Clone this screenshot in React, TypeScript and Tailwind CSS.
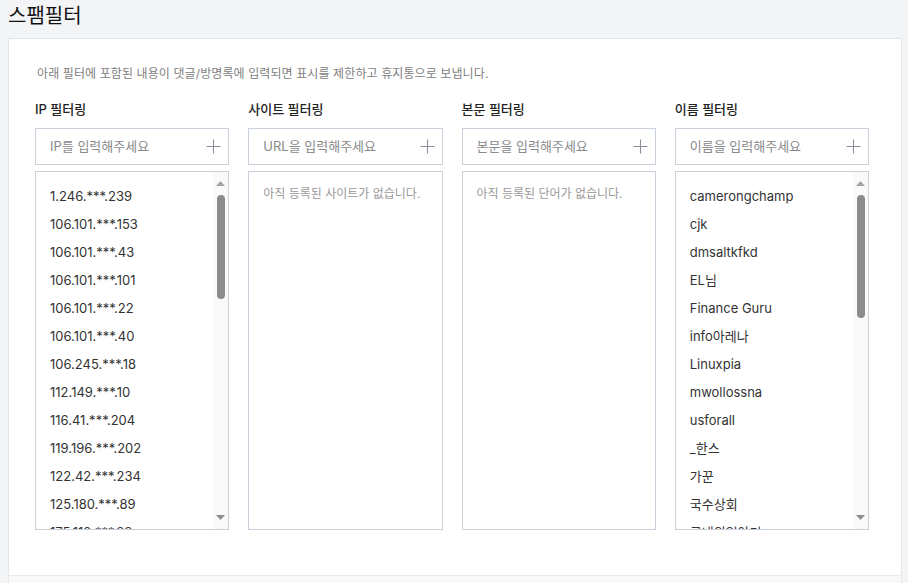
import React from 'react';

const ips = [
  '1.246.***.239', '106.101.***.153', '106.101.***.43', '106.101.***.101', '106.101.***.22',
  '106.101.***.40', '106.245.***.18', '112.149.***.10', '116.41.***.204', '119.196.***.202',
  '122.42.***.234', '125.180.***.89', '175.112.***.88',
];

const names = [
  'camerongchamp', 'cjk', 'dmsaltkfkd', 'EL님', 'Finance Guru', 'info아레나', 'Linuxpia',
  'mwollossna', 'usforall', '_한스', '가꾼', '국수상회', '국내의일야기',
];

const font = "font-['Inter','Noto_Sans_CJK_KR',sans-serif]";

function Plus() {
  return (
    <svg width="15" height="15" viewBox="0 0 15 15" className="shrink-0">
      <path d="M7.5 0.5v14M0.5 7.5h14" stroke="#8a8f98" strokeWidth="1.1" fill="none" />
    </svg>
  );
}

function Scrollbar({ thumb }: { thumb: number }) {
  return (
    <div className="w-[15px] shrink-0 bg-[#f9f9f9] flex flex-col items-center">
      <svg width="9" height="5" viewBox="0 0 9 5" className="mt-[9px]">
        <path d="M0 5L4.5 0L9 5Z" fill="#a3a3a3" />
      </svg>
      <div className="mt-[9px] w-[8px] rounded-full bg-[#8c8c8c]" style={{ height: thumb }} />
      <div className="flex-1" />
      <svg width="9" height="5" viewBox="0 0 9 5" className="mb-[9px]">
        <path d="M0 0L4.5 5L9 0Z" fill="#8c8c8c" />
      </svg>
    </div>
  );
}

function FilterColumn({ label, placeholder, items, empty, thumb }: { label: string; placeholder: string; items: string[]; empty: string; thumb: number }) {
  return (
    <div className="flex flex-col">
      <div className="text-[13px] font-medium text-[#222] h-[20px] leading-[20px]">{label}</div>
      <div className="mt-[9px] h-[37px] border border-[#c9d1dc] bg-white flex items-center justify-between pl-[14px] pr-[7px]">
        <span className="text-[13px] text-[#8a8a8a]">{placeholder}</span>
        <Plus />
      </div>
      <div className="mt-[6px] h-[359px] border border-[#c9d1dc] bg-white flex overflow-hidden">
        {items.length > 0 ? (
          <>
            <ul className="flex-1 pt-[10px] pl-[14px] overflow-hidden">
              {items.map((it, i) => (
                <li key={i} className="h-[28px] leading-[28px] text-[13px] text-[#333] whitespace-nowrap">{it}</li>
              ))}
            </ul>
            <Scrollbar thumb={thumb} />
          </>
        ) : (
          <div className="pt-[13px] pl-[14px] text-[12px] text-[#999]">{empty}</div>
        )}
      </div>
    </div>
  );
}

export default function App() {
  return (
    <div className={`${font} bg-[#f3f4f6] w-[908px] h-[583px] overflow-hidden flex flex-col`}>
      <div className="pl-[8px] pt-[2px] h-[38px] shrink-0 text-[20px] text-[#111] leading-[28px]">스팸필터</div>
      <div className="ml-[8px] w-[894px] border border-[#e2e5ea] border-b-0 bg-white px-[26px] pt-[26px] h-[537px] shrink-0">
        <p className="text-[12px] text-[#808080] pl-[2px] leading-[18px] tracking-[0.1px]">
          아래 필터에 포함된 내용이 댓글/방명록에 입력되면 표시를 제한하고 휴지통으로 보냅니다.
        </p>
        <div className="mt-[16px] grid grid-cols-4 gap-x-[19px] w-[834px]">
          <FilterColumn label="IP 필터링" placeholder="IP를 입력해주세요" items={ips} empty="" thumb={104} />
          <FilterColumn label="사이트 필터링" placeholder="URL을 입력해주세요" items={[]} empty="아직 등록된 사이트가 없습니다." thumb={0} />
          <FilterColumn label="본문 필터링" placeholder="본문을 입력해주세요" items={[]} empty="아직 등록된 단어가 없습니다." thumb={0} />
          <FilterColumn label="이름 필터링" placeholder="이름을 입력해주세요" items={names} empty="" thumb={123} />
        </div>
      </div>
      <div className="ml-[8px] w-[894px] border-t border-x border-[#e8eaee] bg-[#f8f9fa] flex-1" />
    </div>
  );
}
